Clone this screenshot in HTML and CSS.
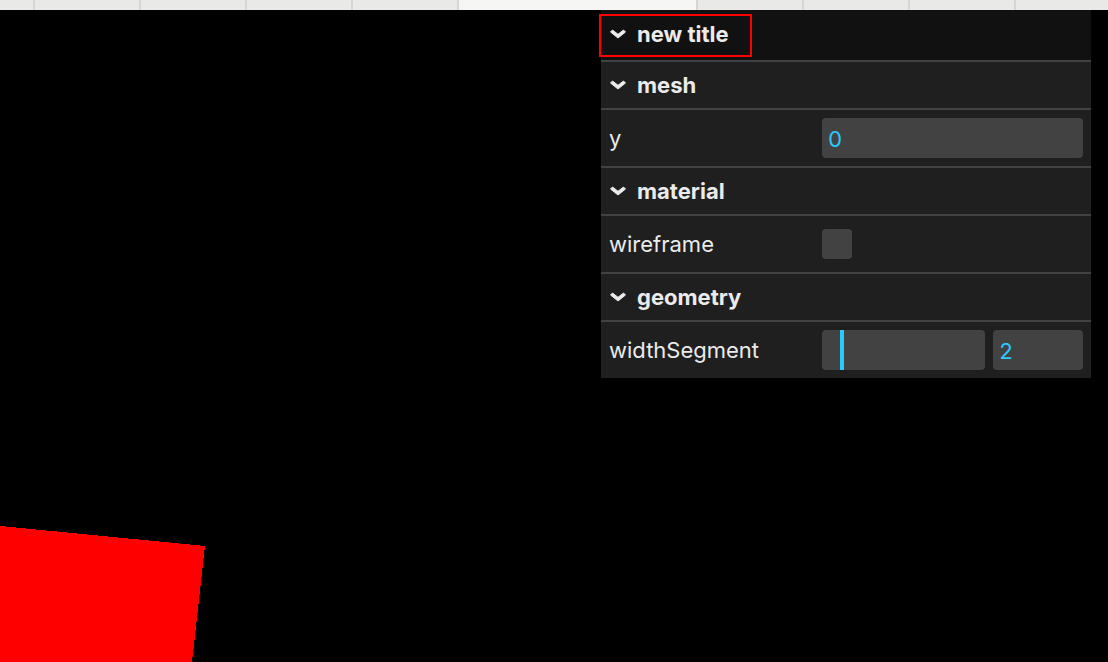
FILE: index.html
```html
<!DOCTYPE html>
<html>
<head>
<meta charset="utf-8">
<title>lil-gui</title>
<link rel="stylesheet" href="styles.css">
</head>
<body>
<div class="tabbar">
  <span class="tab t-first"></span>
  <span class="tab"></span>
  <span class="tab"></span>
  <span class="tab"></span>
  <span class="tab"></span>
  <span class="tab active"></span>
  <span class="tab"></span>
  <span class="tab"></span>
  <span class="tab"></span>
  <span class="tab t-last"></span>
</div>
<div class="stage">
  <svg class="scene" width="1108" height="652" viewBox="0 0 1108 652" shape-rendering="crispEdges">
    <polygon points="-20,514 205,536 192,652 -20,652" fill="#ff0000"/>
  </svg>
  <div class="gui">
    <div class="title root-title">
      <svg class="chev" width="18" height="10" viewBox="0 0 18 10"><polygon points="1.5,3 3.5,1 9,5.3 14.5,1 16.5,3 9,9" fill="#ebebeb" stroke="#ebebeb" stroke-width="1" stroke-linejoin="round"/></svg>
      <span>new title</span>
    </div>
    <div class="highlight"></div>
    <div class="folder">
      <div class="title sub-title">
        <svg class="chev" width="18" height="10" viewBox="0 0 18 10"><polygon points="1.5,3 3.5,1 9,5.3 14.5,1 16.5,3 9,9" fill="#ebebeb" stroke="#ebebeb" stroke-width="1" stroke-linejoin="round"/></svg>
        <span>mesh</span>
      </div>
      <div class="ctrl">
        <div class="name">y</div>
        <div class="widget"><div class="num wide">0</div></div>
      </div>
    </div>
    <div class="folder">
      <div class="title sub-title">
        <svg class="chev" width="18" height="10" viewBox="0 0 18 10"><polygon points="1.5,3 3.5,1 9,5.3 14.5,1 16.5,3 9,9" fill="#ebebeb" stroke="#ebebeb" stroke-width="1" stroke-linejoin="round"/></svg>
        <span>material</span>
      </div>
      <div class="ctrl">
        <div class="name">wireframe</div>
        <div class="widget"><div class="check"></div></div>
      </div>
    </div>
    <div class="folder">
      <div class="title sub-title">
        <svg class="chev" width="18" height="10" viewBox="0 0 18 10"><polygon points="1.5,3 3.5,1 9,5.3 14.5,1 16.5,3 9,9" fill="#ebebeb" stroke="#ebebeb" stroke-width="1" stroke-linejoin="round"/></svg>
        <span>geometry</span>
      </div>
      <div class="ctrl">
        <div class="name">widthSegment</div>
        <div class="widget">
          <div class="slider"><div class="fill" style="width:11%"></div></div>
          <div class="num short">2</div>
        </div>
      </div>
    </div>
  </div>
</div>
</body>
</html>
```

FILE: styles.css
```css
* {
  box-sizing: border-box;
}

body {
  margin: 0;
  width: 1108px;
  height: 662px;
  overflow: hidden;
  background: #000000;
  font-family: Inter, "Noto Sans", sans-serif;
}

.tabbar {
  display: flex;
  height: 10px;
  background: #e9e9e7;
}

.tab {
  display: block;
  width: 106px;
  flex-shrink: 0;
  border-left: 2px solid #d6d6d4;
}

.tab.t-first {
  width: 33px;
  border-left: 0;
}

.tab.active {
  width: 239px;
  background: #f6f6f4;
}

.tab.t-last {
  flex: 1;
}

.stage {
  position: relative;
  height: 652px;
}

.scene {
  position: absolute;
  left: 0;
  top: 0;
}

.gui {
  position: absolute;
  top: 0;
  right: 17px;
  width: 490px;
  background: #1f1f1f;
  color: #ebebeb;
  font-size: 22px;
}

.title {
  display: flex;
  align-items: center;
  height: 50px;
  padding: 0 8px;
  font-weight: 700;
  white-space: nowrap;
}

.root-title {
  background: #111111;
  padding-bottom: 2px;
}

.sub-title {
  border-top: 2px solid #424242;
  border-bottom: 2px solid #424242;
}

.chev {
  display: block;
  margin-left: 0;
  margin-right: 10px;
  flex-shrink: 0;
}

.highlight {
  position: absolute;
  left: -2px;
  top: 4px;
  width: 153px;
  height: 43px;
  border: 2px solid #ff0000;
}

.ctrl {
  display: flex;
  align-items: center;
  min-height: 40px;
  margin: 8px 0;
  padding: 0 8px;
}

.name {
  width: 213px;
  flex-shrink: 0;
  white-space: nowrap;
}

.widget {
  flex: 1;
  display: flex;
  align-items: center;
  gap: 8px;
}

.num {
  height: 40px;
  padding: 2px 0 0 6px;
  border-radius: 4px;
  background: #424242;
  color: #2cc9ff;
  font-family: Inter, "Noto Sans", sans-serif;
  font-variant-numeric: tabular-nums;
  font-size: 22px;
  line-height: 38px;
}

.num.wide {
  flex: 1;
}

.num.short {
  width: 90px;
}

.check {
  width: 30px;
  height: 30px;
  border-radius: 4px;
  background: #424242;
}

.slider {
  width: 163px;
  height: 40px;
  border-radius: 4px;
  background: #424242;
  overflow: hidden;
}

.fill {
  box-sizing: content-box;
  height: 100%;
  border-right: 4px solid #2cc9ff;
}
```
